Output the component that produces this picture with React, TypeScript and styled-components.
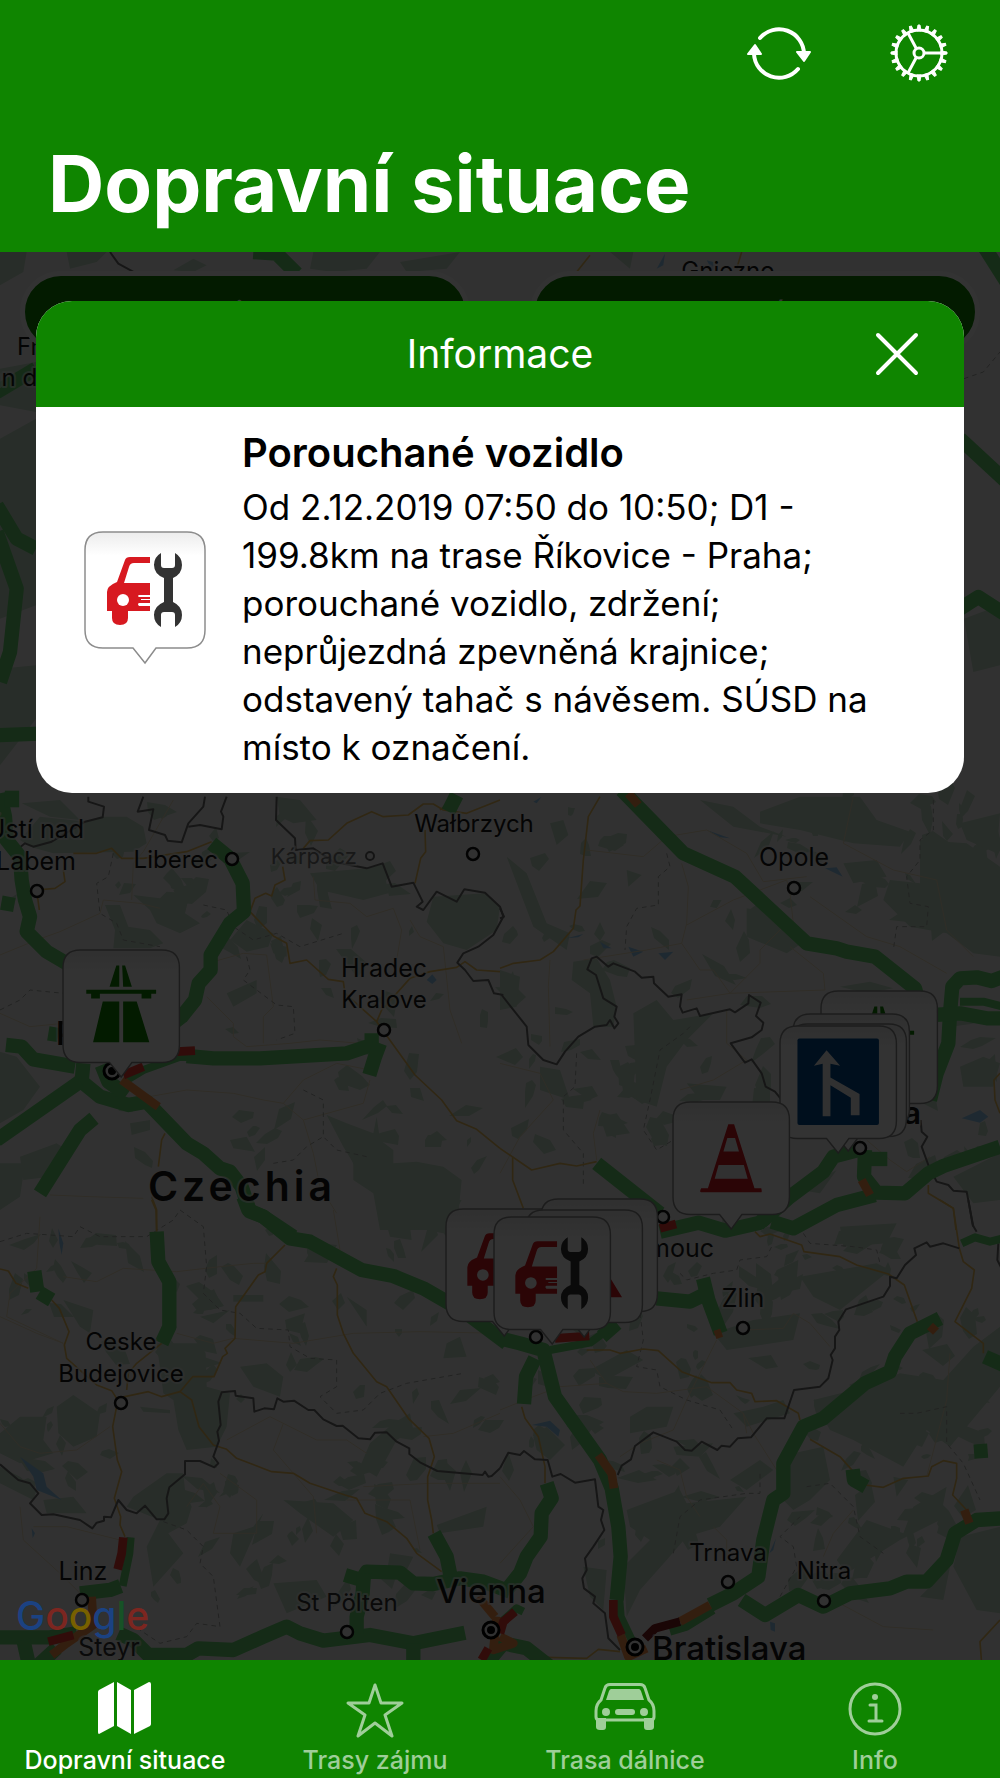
import React from "react";
import styled, { createGlobalStyle } from "styled-components";

const GREEN = "#0f8500";
const FONT = 'Inter, "Liberation Sans", sans-serif';

const GlobalStyle = createGlobalStyle`
  *, *::before, *::after { box-sizing: border-box; }
  body { margin: 0; background: #313131; font-family: ${FONT}; }
  h1, h2, h3, p { margin: 0; }
  button { font: inherit; color: inherit; border: 0; background: none; padding: 0; cursor: pointer; }
`;

/* ---------- layout ---------- */

const Screen = styled.div`
  display: flex;
  flex-direction: column;
  min-height: 100vh;
`;

const Header = styled.header`
  display: flex;
  flex-direction: column;
  padding: 21px 49px 20px 48px;
  background: ${GREEN};
  color: #fff;
`;

const Actions = styled.div`
  display: flex;
  justify-content: flex-end;
  gap: 76px;
`;

const IconButton = styled.button`
  display: grid;
  place-items: center;
  width: 64px;
  height: 64px;
`;

const Title = styled.h1`
  margin-top: 51px;
  font-size: 78px;
  line-height: 96px;
  font-weight: 700;
  white-space: nowrap;
`;

const Stage = styled.main`
  position: relative;
  display: grid;
  flex: 1;
  align-items: start;
  overflow: hidden;
  background: #f5f5f5;
`;

const MapCanvas = styled.svg`
  position: absolute;
  inset: 0;
  width: 100%;
  height: 100%;
  font-family: ${FONT};
`;

const FilterBar = styled.div`
  position: relative;
  grid-area: 1 / 1;
  display: flex;
  gap: 60px;
  padding: 19px 20px;
`;

const Pill = styled.button`
  flex: 1;
  height: 82px;
  border: 5px solid #fff;
  border-radius: 41px;
  background: ${GREEN};
  color: #fff;
  font-size: 30px;
  line-height: 40px;
`;

const Scrim = styled.div`
  position: absolute;
  inset: 0;
  background: rgba(0, 0, 0, 0.8);
`;

const Attribution = styled.div`
  position: absolute;
  left: 16px;
  bottom: 20px;
  font-size: 39px;
  line-height: 48px;
  font-weight: 500;
`;

const Letter = styled.span<{ $color: string }>`
  color: ${(p) => p.$color};
`;

const Dialog = styled.section`
  position: relative;
  grid-area: 1 / 1;
  margin: 49px 36px;
  border-radius: 36px;
  overflow: hidden;
  background: #fff;
  color: #000;
`;

const DialogBar = styled.div`
  display: grid;
  grid-template-columns: 64px 1fr 64px;
  align-items: center;
  height: 106px;
  padding: 0 35px;
  background: ${GREEN};
  color: #fff;
`;

const DialogTitle = styled.h2`
  grid-column: 2;
  text-align: center;
  font-size: 39px;
  line-height: 48px;
  font-weight: 400;
`;

const DialogBody = styled.div`
  display: flex;
  align-items: center;
  gap: 36px;
  padding: 18px 64px 22px 48px;
`;

const DialogIcon = styled.svg`
  flex: none;
  width: 122px;
  height: 134px;
`;

const Message = styled.div`
  flex: 1;
`;

const MessageTitle = styled.h3`
  font-size: 40px;
  line-height: 56px;
  font-weight: 600;
`;

const MessageText = styled.p`
  padding-top: 2px;
  font-size: 35px;
  line-height: 48px;
`;

const TabBar = styled.nav`
  display: flex;
  height: 118px;
  padding-top: 22px;
  background: ${GREEN};
`;

const Tab = styled.a<{ $active?: boolean }>`
  flex: 1;
  display: flex;
  flex-direction: column;
  align-items: center;
  gap: 6px;
  color: ${(p) => (p.$active ? "#fff" : "#9fce99")};
  font-size: 25px;
  line-height: 32px;
  font-weight: 500;
  text-decoration: none;
  white-space: nowrap;
`;

const TabIcon = styled.svg`
  width: 64px;
  height: 56px;
`;

/* ---------- map data: four tiles, each 1500 units wide for 500 px ---------- */

type Kind = "free" | "freeThin" | "slow" | "jam" | "stop" | "road" | "minor" | "border" | "region";
type Line = [Kind, string];

interface Tile {
  x: number;
  y: number;
  woods: string[];
  water: string[];
  lines: Line[];
}

const STROKES: Record<Kind, { stroke: string; width: number; dash?: string }> = {
  minor: { stroke: "#eee0c0", width: 3 },
  region: { stroke: "#a9aca9", width: 3, dash: "14 12" },
  road: { stroke: "#eec062", width: 5 },
  border: { stroke: "#6f6f6f", width: 6 },
  free: { stroke: "#68d673", width: 43 },
  freeThin: { stroke: "#68d673", width: 24 },
  slow: { stroke: "#ff974d", width: 26 },
  jam: { stroke: "#f23c32", width: 26 },
  stop: { stroke: "#811f1f", width: 26 },
};
const ORDER: Kind[] = ["minor", "region", "road", "border", "free", "freeThin", "slow", "jam", "stop"];

const TILES: Tile[] = [
  {
    x: 0,
    y: 780,
    woods: [
      "60,180 120,110 260,125 300,110 380,110 430,140 440,190 400,215 160,220 90,200",
      "315,375 360,375 385,440 450,450 490,490 450,505 340,505 345,450",
      "400,345 480,355 500,335 570,340 555,400 600,430 540,460 470,430 450,390",
      "0,815 50,830 120,920 70,990 0,1030",
      "980,1005 1040,1030 1120,1060 1130,1010 1140,1080 1180,1110 1180,1150 1250,1145 1330,1160 1385,1200 1370,1350 1140,1350 1120,1240 1060,1200 1060,1150 1030,1100",
      "1300,350 1455,340 1500,380 1490,450 1400,510 1330,490 1280,425",
      "930,280 1100,265 1150,260 1165,340 1090,360 960,330",
      "60,1130 170,1090 200,1110 150,1190 70,1200",
      "690,480 740,420 820,460 805,500 740,515",
      "830,50 900,60 950,120 880,130 840,110",
      "680,640 770,600 770,640 700,680",
      "0,1150 75,1150 60,1250 0,1290",
      "65,70 180,60 240,120 150,110",
      "520,330 590,305 580,330 530,350",
      "810,490 860,500 860,530 820,520",
      "390,1030 450,1020 450,1050 395,1065",
      "690,1080 740,1070 765,1115 700,1105",
    ],
    water: ["1280,600 1297,583 1310,600 1297,612"],
    lines: [
      ["minor", "0,525 110,480 180,455 300,400 310,360 420,370 480,385"],
      ["minor", "110,990 170,940 220,900 300,700"],
      ["minor", "395,360 400,250 430,215 520,60"],
      ["minor", "620,650 700,730 700,770 740,800 870,790 960,780 1080,790"],
      ["minor", "640,545 730,520 800,525 820,680 790,710 790,790"],
      ["minor", "420,955 560,930 700,940 790,960 850,970 910,1020 940,1120 960,1220 1010,1300"],
      ["minor", "850,970 910,900 1010,850 1110,870"],
      ["minor", "910,1020 1090,970 1110,900"],
      ["minor", "940,290 945,360 1050,370 1100,410 1180,385 1205,450 1190,540"],
      ["minor", "1230,420 1260,470 1330,500 1350,690 1385,790"],
      ["minor", "0,700 90,740 190,730"],
      ["minor", "150,1245 270,1250 430,1255"],
      ["region", "340,220 325,290 290,310 300,400 350,430 370,480 480,500"],
      ["region", "610,375 680,390 700,440 760,480 830,460 900,500 1030,460"],
      ["region", "740,530 750,570 730,600 830,675 880,680 885,760 830,780"],
      ["region", "910,930 970,960 970,1070 1010,1110 1100,1130"],
      ["region", "0,690 60,660 90,630 190,640"],
      ["region", "820,1150 880,1140 920,1100 970,1070"],
      ["road", "220,220 290,220 335,205 365,235 430,235 560,215 635,185"],
      ["road", "750,395 820,468 860,490 870,550 920,540 985,598 1030,605 1035,640 1130,725 1245,885 1325,960 1370,1022 1430,1048 1500,1105"],
      ["road", "910,205 930,182 985,180 1040,130 1115,95 1150,110 1225,105 1270,72 1300,72 1330,90 1400,100 1500,60"],
      ["road", "1275,150 1277,215 1262,235 1245,310"],
      ["road", "750,395 765,355 797,340 815,348 825,315 855,300 848,260"],
      ["road", "1130,725 1145,690 1230,595 1290,575 1370,562 1395,545 1430,570 1500,575"],
      ["road", "495,1060 485,1080 475,1160"],
      ["road", "455,1250 470,1290 470,1350"],
      ["road", "190,270 195,305 165,325 110,330 118,390"],
      ["road", "1365,50 1320,90"],
      ["border", "265,50 265,65 312,80 308,112 255,125 155,185 100,200 75,190 50,210"],
      ["border", "430,50 413,95 460,88 447,150 495,165 503,182 545,187 565,130 610,80 615,50"],
      ["border", "565,140 600,135 665,148 670,110 663,95 680,50"],
      ["border", "830,50 828,120 885,175 887,210 940,205 1000,245 1100,265 1148,250 1175,320 1240,308 1268,365 1250,380 1270,390 1310,335 1370,365 1393,328 1455,338 1500,380 1510,410 1480,465 1435,500 1390,520 1372,548 1395,570 1420,603 1465,600 1482,640 1510,645"],
      ["free", "0,40 15,110 20,180 60,230 65,300 75,360 90,410 80,455 140,515 200,550 360,640"],
      ["free", "36,32 36,82"],
      ["free", "4,368 43,375"],
      ["free", "635,190 690,235 728,310 732,395 690,430 632,525 632,570 596,610 585,660 545,710 480,760"],
      ["free", "18,795 65,800 100,838 225,860"],
      ["free", "250,850 245,905 300,950 385,975 440,965 560,1090 610,1120 660,1165 690,1175 725,1220 750,1295 790,1310 880,1370"],
      ["free", "-10,1080 240,905"],
      ["free", "305,855 325,905 380,945"],
      ["free", "282,1015 240,1050 180,1145 120,1240"],
      ["free", "560,828 640,835 780,835 1040,820 1115,795 1115,760"],
      ["freeThin", "380,900 430,870 540,830 600,832"],
      ["free", "1140,790 1125,830 1108,885"],
      ["free", "1345,95 1370,45"],
      ["free", "145,760 175,765"],
      ["slow", "365,900 475,980"],
      ["jam", "370,885 430,860"],
      ["jam", "530,815 585,812"],
    ],
  },
  {
    x: 500,
    y: 780,
    woods: [
      "780,95 900,50 1080,50 1130,120 1230,155 1200,200 1060,190 900,150 780,130",
      "1260,180 1400,190 1500,260 1500,530 1420,520 1340,460 1230,440 1150,360 1170,300 1260,310",
      "740,385 820,400 920,480 860,520 740,470",
      "400,700 470,660 520,720 640,700 560,780 500,860 470,980 410,960",
      "220,545 290,535 330,600 350,680 340,740 280,740 270,640 215,600",
      "0,570 60,590 50,680 0,690",
      "20,230 80,280 140,430 210,460 200,510 100,440",
      "150,130 190,120 205,165 170,195",
      "1380,860 1450,830 1500,850 1480,920 1390,920",
      "1360,1190 1500,1120 1500,1260 1420,1270",
      "1030,250 1130,240 1160,290 1060,310",
      "120,860 180,870 210,960 120,930",
      "300,1010 350,1000 390,1060 320,1070",
      "560,910 680,920 660,960 600,960",
      "640,360 665,360 650,385 630,380",
      "1380,130 1500,100 1490,220 1400,180",
      "380,270 425,285 385,320",
      "600,60 700,80 780,140 860,170 700,140",
      "1020,620 1110,605 1180,625 1100,640",
      "900,1230 1010,1170 960,1240",
    ],
    water: [
      "385,500 430,515 400,530",
      "475,520 520,515 495,540",
      "1385,1015 1440,990 1465,1010 1440,1028",
      "975,265 1010,262 1028,290",
      "620,150 690,175 660,172",
      "200,475 250,462 235,472",
      "300,485 335,505 310,505",
      "100,65 125,50 110,70",
    ],
    lines: [
      ["minor", "260,210 430,230 500,170 620,150 740,220 790,305 920,290"],
      ["minor", "560,435 700,360 860,300 870,340 880,430"],
      ["minor", "545,250 565,320 560,430 545,490 440,510 250,540"],
      ["minor", "545,490 600,570 640,570 690,640 780,550 780,510 850,440"],
      ["minor", "870,500 970,580 975,630 690,640 560,660"],
      ["minor", "680,690 680,790 740,840 640,900 540,930"],
      ["minor", "0,850 120,880 160,960 60,1070 0,1180"],
      ["minor", "300,990 280,1060 290,1140"],
      ["minor", "150,540 145,620 150,800"],
      ["minor", "930,350 1100,470 1200,500 1340,580"],
      ["minor", "1060,50 1030,190 1180,270 1310,300 1340,450 1420,530"],
      ["minor", "1100,1080 1170,1140 1220,1175 1290,1130"],
      ["region", "500,220 510,260 475,290 475,375 410,385 380,440 375,510"],
      ["region", "570,740 550,760 480,810 450,960 430,1050 470,1110 520,1080"],
      ["region", "230,820 225,920 190,950 190,1050 250,1120 250,1220"],
      ["region", "1300,60 1300,150 1260,180 1260,240 1220,290 1230,370 1285,380 1280,440 1190,440 1180,510"],
      ["road", "0,565 40,550 120,540 160,515 220,445 228,390 240,378 250,240 265,110 300,50"],
      ["road", "0,1105 95,1170 180,1150 230,1158 290,1145"],
      ["road", "38,1130 38,1200 70,1285"],
      ["road", "1500,880 1482,900 1485,960 1500,1000"],
      ["road", "1285,1215 1285,1240 1360,1285 1368,1350"],
      ["border", "0,385 12,410 0,415"],
      ["border", "5,645 80,740 85,795 130,840 170,853 195,815 235,770 285,740 320,735 330,720 343,745 355,730 343,710 350,680 310,655 288,585 262,568 275,535 290,530 325,560 340,550 405,575 425,593 460,590 462,610 505,650 545,643 540,680 548,698 590,685 600,708 690,688 705,697 745,670 747,645 782,668 768,708 790,728 785,750 755,772 692,790 735,848 755,838 785,880 797,920 825,935 845,960"],
      ["border", "1262,1020 1265,1055 1282,1070 1265,1100 1285,1155 1310,1205 1345,1215 1360,1232 1400,1235 1420,1340"],
      ["free", "365,30 550,220 705,290 920,490 1010,505 1040,515 1125,530 1245,625 1260,680"],
      ["free", "1510,590 1475,603 1430,592 1380,595 1357,620 1350,700 1345,790 1310,880 1290,960"],
      ["free", "1300,705 1380,700 1460,715 1510,715"],
      ["freeThin", "1380,665 1450,665 1510,680"],
      ["free", "290,1150 480,1300"],
      ["free", "1095,1105 1000,1130 970,1175 870,1250 785,1325"],
      ["free", "1095,1110 1092,1190 1130,1238 1215,1240 1285,1180 1330,1158 1500,1100"],
      ["free", "1110,1137 1162,1137"],
      ["slow", "385,40 415,75"],
      ["slow", "1085,1200 1110,1245"],
    ],
  },
  {
    x: 0,
    y: 1200,
    woods: [
      "470,430 600,430 617,460 620,560 690,580 680,680 650,740 560,750 535,690 520,600 490,580",
      "1140,0 1385,0 1330,100 1230,80 1235,120 1170,110",
      "170,620 220,585 300,640 290,710 220,740 175,700",
      "0,700 60,650 140,650 130,720 160,760 60,790 0,760",
      "400,890 500,820 550,820 555,870 575,920 560,970 505,1000 550,1060 460,1160 440,1040 480,960 380,920",
      "130,900 220,890 260,940 140,940",
      "700,1000 760,980 790,940 720,1100 690,1060",
      "850,900 1000,910 1060,960 1000,1010 900,940",
      "820,1150 950,1140 980,1190 860,1240",
      "1340,430 1380,410 1400,470 1330,475",
      "720,500 800,490 850,530 840,590 760,560",
      "1180,670 1230,640 1240,690 1190,720 1130,830 1080,800 1110,730",
      "190,300 280,330 270,400 240,380",
      "420,620 510,630 510,640 430,635",
      "855,360 915,340 900,400 860,390",
      "1310,975 1460,920 1450,980 1320,1000",
      "0,800 60,830 110,870 100,900 0,850",
      "700,285 790,285 790,305 700,305",
      "600,350 690,330 640,370",
      "1040,290 1100,330 1100,380",
      "1170,1060 1240,1070 1220,1110 1160,1120",
    ],
    water: ["60,770 130,820 140,860 185,900 110,870 100,830", "175,85 190,130 185,165 178,130", "95,985 105,1000 98,1015"],
    lines: [
      ["minor", "0,670 60,740 120,760 230,750 330,680"],
      ["minor", "0,350 110,400 190,430 20,350 30,280 110,205 120,50"],
      ["minor", "190,230 290,245 370,205 530,215 660,200 760,190 800,190"],
      ["minor", "530,400 640,430 700,415 880,430 1060,400 1260,395 1500,400"],
      ["minor", "680,720 810,650 950,720 1040,720 1100,760"],
      ["minor", "850,670 820,750 940,890 950,1000"],
      ["minor", "560,920 610,850 660,920 640,1000 770,1000 770,900 660,820"],
      ["minor", "60,920 70,1020 180,1120 240,1180"],
      ["minor", "100,980 200,980 360,1020"],
      ["minor", "1090,860 1290,850 1500,850"],
      ["minor", "1040,900 1230,900 1260,1050"],
      ["minor", "1270,710 1360,700 1500,640"],
      ["minor", "1000,30 1020,150 900,100"],
      ["region", "0,125 80,100 220,110 240,80 300,110 440,110 520,60 540,30 610,80 620,200 610,280 660,330 720,340 770,385 865,390 870,440 930,475 1010,480 1010,560 960,590 1010,640 1090,630 1140,580 1220,550 1390,520"],
      ["region", "490,965 560,990 610,1040 600,1090 640,1130 660,1280 590,1270 560,1310 480,1330 420,1290"],
      ["road", "0,207 25,213 48,250 85,265"],
      ["road", "455,0 468,30 470,95"],
      ["road", "155,300 178,325 207,395 193,435 200,475 290,555 335,572 350,595 445,575 485,590 540,575 578,530 642,530 668,470 682,460 675,445 705,415 707,320 775,225 795,215 800,190 855,135"],
      ["road", "485,430 410,490 385,520 380,570"],
      ["road", "350,620 338,680 352,780 365,815 343,895 362,950 360,975 375,1010"],
      ["road", "540,575 575,600 597,680 640,735 680,748 710,775 815,815 880,820 930,850 1035,885 1070,895 1095,940 1160,965 1220,1015 1250,1060 1325,1115"],
      ["road", "1010,205 1000,230 1012,255 1012,345 1030,400 1060,460 1130,545 1160,560 1225,655 1287,715 1303,770 1283,830 1283,900 1295,960 1300,1000"],
      ["border", "0,793 55,840 90,850 115,880 90,910 125,945 160,943 240,960 277,985 290,968 312,962 312,950 333,952 355,900 380,930 410,940 435,917 470,958 493,958 505,940 500,895 508,862 555,823 555,783 600,783 643,802 655,790 640,770 657,722 652,695 662,675 655,605 665,577 705,573 707,587 760,595 763,635 793,625 822,628 832,595 850,605 882,602 925,630 943,630 970,658 1010,678 1028,677 1075,715 1110,718 1125,698 1160,697 1190,725 1228,745 1228,762 1260,787 1312,813 1448,825 1455,815 1465,830 1475,828 1500,805"],
      ["free", "730,-10 745,30 790,50 870,115 930,125 1085,210 1180,228 1270,265 1400,340 1520,430"],
      ["free", "470,95 475,185 508,245 508,380 485,430"],
      ["free", "103,213 112,275"],
      ["free", "118,278 155,300"],
      ["freeThin", "392,1012 388,1060 368,1158"],
      ["free", "240,1180 330,1170 362,1158"],
      ["free", "0,1312 150,1312 230,1300"],
      ["free", "70,1320 88,1400"],
      ["free", "110,1400 170,1345"],
      ["free", "355,1300 400,1320 445,1365 560,1365 595,1345 700,1350 790,1310 860,1280 900,1300 970,1322 1110,1305 1240,1330 1395,1298"],
      ["free", "1240,1330 1240,1400"],
      ["free", "1035,1125 1085,1140 1100,1115 1200,1118 1240,1150 1300,1152 1380,1135 1450,1145 1530,1175"],
      ["free", "1092,1120 1088,1180 1070,1250 1070,1300"],
      ["free", "1302,1000 1340,1070 1352,1130"],
      ["slow", "155,1365 200,1330 280,1275 275,1190"],
      ["slow", "1435,1190 1485,1250"],
      ["jam", "370,1012 365,1060 353,1108"],
      ["jam", "145,1325 220,1305"],
    ],
  },
  {
    x: 500,
    y: 1200,
    woods: [
      "380,930 540,870 560,910 740,890 660,980 560,1010 500,1080 420,1170 380,1250 370,1100 450,1020 390,980",
      "250,1100 320,1110 310,1230 270,1190",
      "880,760 970,740 990,840 930,900 880,930 830,880 860,800",
      "940,600 1100,560 1200,520 1330,540 1420,440 1500,380 1500,560 1350,740 1280,690 1210,800 1060,720 990,690",
      "1010,1080 1100,960 1210,1000 1240,920 1340,860 1320,960 1200,1020 1120,1070 1040,1120",
      "1380,1010 1500,980 1500,1240 1430,1230 1360,1100",
      "900,230 1130,190 1170,210 1020,330 940,290",
      "640,400 760,360 900,340 880,420 680,450",
      "270,510 380,450 430,480 320,540",
      "390,650 440,620 520,620 500,680 390,700",
      "1020,80 1190,70 1160,130 1030,140",
      "690,840 780,780 820,810 740,870",
      "700,640 790,620 850,600 870,640 740,680",
      "520,740 640,730 600,770 530,765",
      "100,710 140,680 195,735 150,780 110,750",
      "830,210 895,180 890,240 840,260",
      "1180,830 1225,840 1190,890",
      "1260,1190 1350,1100 1330,1200",
    ],
    water: ["95,675 150,662 180,690 175,710 140,680", "810,1265 825,1270 825,1295 812,1290", "808,1060 828,1015 820,1050"],
    lines: [
      ["minor", "0,630 100,590 180,560 320,550 370,575 470,580 620,560 730,640 740,700"],
      ["minor", "270,480 320,550"],
      ["minor", "730,640 760,700 830,810"],
      ["minor", "360,770 420,730 520,690 560,600 650,420"],
      ["minor", "470,780 540,810 560,890 600,950"],
      ["minor", "740,390 850,385 880,340 930,370 990,440"],
      ["minor", "680,1090 680,1020 640,980"],
      ["minor", "1060,930 1000,1000 970,1070"],
      ["minor", "1280,830 1340,600 1350,460"],
      ["minor", "1000,1200 1150,1280 1300,1290"],
      ["minor", "0,830 60,900 100,980 0,1090"],
      ["region", "540,220 560,240 640,220 710,210 720,180 800,170 820,130"],
      ["region", "420,340 430,420 410,500 470,510 480,560 560,600 660,630 700,690"],
      ["region", "910,100 930,130 1060,140 1130,150 1140,190"],
      ["region", "1200,640 1250,640 1340,620 1340,730 1390,790 1440,900"],
      ["region", "520,1060 540,950 600,900 740,880 780,880 780,810"],
      ["region", "840,1190 890,1100 880,1040 840,1010 900,950"],
      ["region", "920,860 990,850 1060,920 1080,1010 1150,1060"],
      ["road", "260,450 330,450 360,460 430,447 475,452 545,515 635,548 690,548 710,570 755,580 765,605 830,602 895,640 900,660"],
      ["road", "765,95 780,110 810,102 905,135 912,155 1020,170 1070,195 1165,222 1213,255 1252,365"],
      ["road", "1320,0 1360,25 1378,145 1390,185 1423,210 1415,265 1365,365 1450,430 1450,460"],
      ["road", "930,718 1020,770 1060,815"],
      ["road", "1095,855 1150,862 1210,835 1285,828 1295,800 1330,782 1370,790 1370,835 1358,885 1400,930"],
      ["road", "65,620 75,655 115,710 135,800 135,850"],
      ["road", "1500,1260 1440,1325 1445,1390"],
      ["road", "140,1372 260,1375 295,1348 360,1355"],
      ["border", "1405,0 1418,75 1430,95"],
      ["border", "1378,145 1330,130 1290,140 1280,127 1243,145 1248,165 1215,195 1190,235 1170,230 1170,258 1150,290 1038,328 1015,365 1018,390 1005,410 1005,445 992,465 998,480 985,535 960,560 882,570 853,655 800,655 753,712 713,715 690,740 665,737 652,750 605,725 575,752 555,750 530,725 460,697 405,738 393,778 365,797 353,825"],
      ["border", "0,805 25,758 60,765 72,753 105,778 143,780 157,830 182,822 225,848 285,838 295,920 310,930 303,960 313,990 280,1040 255,1075 260,1110 247,1135 252,1165 285,1190 280,1210 315,1240 325,1315 360,1350"],
      ["border", "1495,130 1492,180 1510,215"],
      ["free", "860,-15 780,68 675,92 595,68 480,95"],
      ["free", "815,65 880,85 1010,15 1125,-15"],
      ["free", "470,295 570,305 610,285"],
      ["free", "609,235 625,300 662,400"],
      ["free", "0,415 60,430 130,450 165,590 300,780 335,865 355,980 362,1070 350,1200"],
      ["freeThin", "358,1200 362,1250 400,1330"],
      ["free", "105,475 78,530 72,612"],
      ["freeThin", "150,450 270,428 350,370"],
      ["free", "305,410 350,370"],
      ["free", "140,850 155,895 125,940 122,1010 80,1070 60,1120 20,1170"],
      ["free", "630,1215 700,1180 775,1130 790,1020 820,900 850,880 850,790 910,680 970,655 1095,550 1170,515 1185,470 1230,400 1320,355"],
      ["freeThin", "510,1295 560,1280 640,1230"],
      ["free", "725,1200 795,1245 895,1185 970,1220 1050,1180 1170,1165 1220,1145 1280,1145 1340,1080 1365,1000 1430,960 1510,955"],
      ["free", "1058,808 1062,840 1098,860"],
      ["free", "1422,755 1463,752"],
      ["free", "1455,470 1510,495"],
      ["freeThin", "1385,130 1425,112 1470,125 1510,115"],
      ["freeThin", "0,1270 50,1225 70,1235"],
      ["free", "-40,1390 10,1330 80,1345 150,1400"],
      ["slow", "295,765 335,820 342,865"],
      ["slow", "540,1265 630,1215"],
      ["slow", "1393,930 1408,970"],
      ["slow", "1290,378 1308,395"],
      ["slow", "362,1305 385,1370 440,1345"],
      ["slow", "645,405 665,398"],
      ["slow", "-10,1250 -20,1350 40,1330 0,1310"],
      ["jam", "165,415 268,408"],
      ["jam", "340,1200 340,1250 365,1305"],
      ["jam", "45,1235 10,1265 0,1300"],
      ["jam", "480,85 528,72"],
      ["jam", "-55,1380 -35,1345"],
      ["stop", "435,1315 465,1285 540,1265"],
    ],
  },
  {
    x: 0,
    y: 252,
    woods: [
      "0,0 80,0 70,60 0,100",
      "200,0 320,0 290,30 210,50",
      "520,55 580,20 620,40 580,60",
      "940,0 1140,0 1100,50 1000,60 930,50",
      "1200,30 1380,0 1340,50 1220,60",
      "1830,0 1900,0 1890,50",
      "0,350 108,330 108,480 0,460",
      "0,560 108,500 108,1060 0,1100",
      "0,1250 108,1240 108,1400 0,1540",
      "2892,1100 3000,1060 3000,1240 2920,1260",
    ],
    water: ["1970,50 1995,5 1990,40", "2120,25 2140,30 2140,60"],
    lines: [
      ["border", "330,0 355,35 410,65"],
      ["road", "1730,60 1770,10"],
      ["road", "2210,50 2225,0"],
      ["free", "760,0 830,5 890,65"],
      ["free", "2950,-20 3020,90"],
      ["free", "-10,420 108,350"],
      ["free", "-10,760 50,860 108,890"],
      ["free", "-10,840 50,1010 30,1200 0,1290"],
      ["free", "-10,1450 120,1445"],
      ["free", "2880,560 3020,690"],
      ["free", "2880,1070 2935,1035 3020,1090"],
      ["region", "2892,380 2950,360 3000,300"],
    ],
  },
];

/* Small copses between the large woods: [centre x, centre y, spread x, spread y, count] in map pixels. */
const COPSES = [
  [160, 860, 150, 50, 22],
  [300, 930, 130, 70, 16],
  [240, 1080, 200, 90, 22],
  [430, 1080, 70, 90, 12],
  [600, 1040, 90, 110, 30],
  [700, 1010, 70, 90, 16],
  [560, 880, 60, 70, 10],
  [860, 860, 110, 70, 26],
  [950, 860, 50, 60, 26],
  [950, 1080, 50, 90, 14],
  [110, 1300, 100, 70, 20],
  [280, 1310, 120, 90, 22],
  [420, 1260, 70, 60, 10],
  [60, 1450, 60, 60, 14],
  [300, 1530, 150, 70, 38],
  [430, 1440, 80, 60, 16],
  [680, 1340, 110, 70, 26],
  [800, 1270, 100, 50, 24],
  [900, 1380, 90, 80, 34],
  [680, 1500, 80, 70, 16],
  [880, 1530, 90, 60, 26],
  [560, 1420, 70, 60, 8],
];

function buildCopses(): string[] {
  let seed = 7;
  const next = () => {
    seed = (seed * 16807) % 2147483647;
    return seed / 2147483647;
  };
  const shapes: string[] = [];
  for (const [cx, cy, dx, dy, count] of COPSES) {
    for (let i = 0; i < count; i += 1) {
      const x = cx + (next() * 2 - 1) * dx;
      const y = cy + (next() * 2 - 1) * dy;
      const size = 4 + next() * 9;
      const sides = 4 + Math.floor(next() * 3);
      const turn = next() * Math.PI;
      const points: string[] = [];
      for (let k = 0; k < sides; k += 1) {
        const angle = (k / sides) * Math.PI * 2;
        const r = size * (0.5 + next() * 0.9);
        const px = Math.cos(angle) * r * 1.4;
        const py = Math.sin(angle) * r * 0.7;
        points.push(
          `${Math.round(x + px * Math.cos(turn) - py * Math.sin(turn))},${Math.round(y + px * Math.sin(turn) + py * Math.cos(turn))}`,
        );
      }
      shapes.push(points.join(" "));
    }
  }
  return shapes;
}

const COPSE_SHAPES = buildCopses();

interface City {
  name: string;
  x: number;
  y: number;
  size?: number;
  weight?: number;
  anchor?: "start" | "middle" | "end";
  fill?: string;
  tracking?: number;
}

const CITIES: City[] = [
  { name: "Gniezno", x: 728, y: 279 },
  { name: "Frankfurt", x: 17, y: 355, anchor: "start" },
  { name: "an der Oder", x: -12, y: 386, anchor: "start" },
  { name: "Ústí nad", x: 84, y: 838, anchor: "end", size: 25 },
  { name: "Labem", x: 76, y: 870, anchor: "end", size: 25 },
  { name: "Liberec", x: 218, y: 868, anchor: "end" },
  { name: "Kárpacz", x: 357, y: 864, anchor: "end", size: 22, fill: "#777" },
  { name: "Wałbrzych", x: 474, y: 832 },
  { name: "Opole", x: 794, y: 866, size: 25 },
  { name: "Hradec", x: 384, y: 977, size: 25 },
  { name: "Kralove", x: 384, y: 1008 },
  { name: "Prague", x: 56, y: 1045, size: 32, weight: 600, anchor: "start" },
  { name: "Czechia", x: 242, y: 1201, size: 41, weight: 600, tracking: 4 },
  { name: "Ostrava", x: 921, y: 1124, size: 31, weight: 600, anchor: "end" },
  { name: "Olomouc", x: 714, y: 1257, anchor: "end", size: 25 },
  { name: "Zlin", x: 743, y: 1307, size: 25 },
  { name: "Ceske", x: 121, y: 1350 },
  { name: "Budejovice", x: 121, y: 1382 },
  { name: "Linz", x: 83, y: 1580, size: 25 },
  { name: "St Pölten", x: 347, y: 1611, fill: "#333" },
  { name: "Steyr", x: 109, y: 1656, size: 25, fill: "#333" },
  { name: "Vienna", x: 491, y: 1603, size: 33, weight: 500 },
  { name: "Trnava", x: 728, y: 1561 },
  { name: "Nitra", x: 824, y: 1579 },
  { name: "Bratislava", x: 652, y: 1660, size: 33, weight: 500, anchor: "start" },
];

const TOWNS = [
  [37, 891], [232, 859], [473, 854], [794, 888], [384, 1030], [860, 1148], [663, 1217], [536, 1337],
  [743, 1328], [121, 1403], [82, 1600], [347, 1632], [728, 1582], [824, 1601],
];
const CAPITALS = [[112, 1071], [491, 1630], [635, 1647]];

type MarkerKind = "car" | "motorway" | "cone" | "merge" | "warning" | "blank";

const MARKERS: [MarkerKind, number, number][] = [
  ["motorway", 63, 950],
  ["motorway", 821, 991],
  ["blank", 793, 1014],
  ["blank", 790, 1024],
  ["merge", 780, 1026],
  ["cone", 673, 1102],
  ["car", 446, 1209],
  ["blank", 541, 1199],
  ["warning", 526, 1210],
  ["car", 494, 1217],
];

/* ---------- drawings ---------- */

function MarkerGlyph({ kind }: { kind: MarkerKind }) {
  switch (kind) {
    case "car":
      return (
        <g>
          <path
            d="M65 25H45Q41 25 40 28L32 50Q22 54 22 60V79H27V86Q27 93 35 93T43 86V79H65V74H54Q52 72 54 71H65V68H56V67H65V65H54Q52 64 54 63H65V51H39L44 35Q45 31 49 31H65Z"
            fill="#d71920"
          />
          <circle cx="38" cy="68" r="6" fill="#fff" />
          <path
            d="M76 21V33Q76 36 79 36H87Q90 36 90 33V21Q97 25 97 33Q97 42 88 46V70Q97 74 97 83Q97 91 90 95V83Q90 80 87 80H79Q76 80 76 83V95Q69 91 69 83Q69 74 79 70V46Q69 42 69 33Q69 25 76 21Z"
            fill="#333"
          />
        </g>
      );
    case "motorway":
      return (
        <path
          d="M55 16H58V38H48ZM61 16H64L71 38H62ZM24 41H96V45H91V50H81V45H38V50H29V45H24ZM41 53H58V95H31ZM62 53H76L89 95H62Z"
          fill={GREEN}
        />
      );
    case "cone":
      return (
        <g>
          <path d="M57 23H63L84 89H91Q92 93 91 93H29Q27 93 29 89H36Z" fill="#d71920" />
          <path d="M56 37H64L68 51H52ZM47 65H73L77 79H43Z" fill="#f5f5f5" />
        </g>
      );
    case "merge":
      return (
        <g>
          <rect x="18" y="13" width="84" height="89" rx="2" fill="#004a8f" />
          <path d="M48 25L62 41L52 39V53L82 70V92H73V74L52 61V93H44V39L35 41Z" fill="#f5f5f5" />
        </g>
      );
    case "warning":
      return <path d="M60 26L99 90H21ZM60 43L37 82H83Z" fillRule="evenodd" fill="#d71920" />;
    default:
      return null;
  }
}

function Marker({ kind }: { kind: MarkerKind }) {
  return (
    <g>
      <path
        d="M18 0H102Q120 0 120 18V98Q120 116 102 116H71L60 131L48 116H18Q0 116 0 98V18Q0 0 18 0Z"
        fill="url(#bubble)"
        stroke="#8c8c8c"
        strokeWidth="1.5"
      />
      <MarkerGlyph kind={kind} />
    </g>
  );
}

function TrafficMap() {
  return (
    <MapCanvas viewBox="0 252 1000 1408" preserveAspectRatio="xMidYMin slice" role="img" aria-label="Mapa dopravní situace">
      <defs>
        <linearGradient id="bubble" x1="0" y1="0" x2="0" y2="1">
          <stop offset="0" stopColor="#ececec" />
          <stop offset="0.18" stopColor="#fff" />
        </linearGradient>
      </defs>
      <g fill="#c6e0ca">
        {COPSE_SHAPES.map((points, i) => (
          <polygon key={i} points={points} />
        ))}
      </g>
      {TILES.map((tile, i) => (
        <g key={i} transform={`translate(${tile.x} ${tile.y}) scale(0.33333)`}>
          {tile.woods.map((points) => (
            <polygon key={points} points={points} fill="#c6e0ca" />
          ))}
          {tile.water.map((points) => (
            <polygon key={points} points={points} fill="#98cdf2" />
          ))}
        </g>
      ))}
      {ORDER.map((kind) => (
        <g key={kind}>
          {TILES.map((tile, i) => (
            <g
              key={i}
              transform={`translate(${tile.x} ${tile.y}) scale(0.33333)`}
              fill="none"
              stroke={STROKES[kind].stroke}
              strokeWidth={STROKES[kind].width}
              strokeDasharray={STROKES[kind].dash}
              strokeLinejoin="round"
            >
              {tile.lines
                .filter(([k]) => k === kind)
                .map(([, points]) => (
                  <polyline key={points} points={points} />
                ))}
            </g>
          ))}
        </g>
      ))}
      {TOWNS.map(([x, y]) => (
        <circle key={`${x}-${y}`} cx={x} cy={y} r="6" fill="#f5f5f5" stroke="#111" strokeWidth="2.5" />
      ))}
      <circle cx="370" cy="856" r="4" fill="#f5f5f5" stroke="#666" strokeWidth="2" />
      {CAPITALS.map(([x, y]) => (
        <g key={`${x}-${y}`}>
          <circle cx={x} cy={y} r="8" fill="#f5f5f5" stroke="#000" strokeWidth="3" />
          <circle cx={x} cy={y} r="4" fill="#000" />
        </g>
      ))}
      {CITIES.map((c) => (
        <text
          key={c.name}
          x={c.x}
          y={c.y}
          fontSize={c.size ?? 24}
          fontWeight={c.weight ?? 400}
          textAnchor={c.anchor ?? "middle"}
          letterSpacing={c.tracking}
          fill={c.fill ?? "#181818"}
          stroke="#f5f5f5"
          strokeOpacity="0.6"
          strokeWidth="4"
          strokeLinejoin="round"
          paintOrder="stroke"
        >
          {c.name}
        </text>
      ))}
      {MARKERS.map(([kind, x, y]) => (
        <g key={`${x}-${y}`} transform={`translate(${x} ${y}) scale(0.97)`}>
          <Marker kind={kind} />
        </g>
      ))}
    </MapCanvas>
  );
}

const RefreshIcon = () => (
  <svg width="64" height="64" viewBox="0 0 64 64" fill="none" stroke="#fff" strokeWidth="4" strokeLinecap="round">
    <path d="M13 17A25 25 0 0 1 57 33" />
    <path d="M51 48A25 25 0 0 1 7 33" />
    <path d="M50 31H63L57 40ZM1 33H14L8 24Z" fill="#fff" stroke="#fff" strokeWidth="2" strokeLinejoin="round" />
  </svg>
);

const TEETH = Array.from({ length: 20 }, (_, i) => i * 18);

const GearIcon = () => (
  <svg width="64" height="64" viewBox="0 0 64 64" fill="none" stroke="#fff" strokeWidth="3">
    <circle cx="32" cy="32" r="23" />
    <circle cx="32" cy="32" r="5" />
    <path d="M38 32H55M29 27L21 12M29 37L21 52" />
    {TEETH.map((a) => (
      <path key={a} d="M54 30L60 31V33L54 34Z" fill="#fff" strokeWidth="1" transform={`rotate(${a} 32 32)`} />
    ))}
  </svg>
);

const CloseIcon = () => (
  <svg width="48" height="48" viewBox="0 0 48 48" stroke="#fff" strokeWidth="4" strokeLinecap="round">
    <path d="M5 5L43 43M43 5L5 43" />
  </svg>
);

const MapTabIcon = () => (
  <TabIcon viewBox="0 0 64 56" fill="currentColor">
    <path d="M6 8L21 0V44L6 52Q5 52 5 50V10Q5 9 6 8ZM24 0L38 8V52L24 44ZM41 8L56 0Q58 0 58 2V42Q58 43 57 44L41 52Z" />
  </TabIcon>
);

const StarTabIcon = () => (
  <TabIcon viewBox="0 0 64 56" fill="none" stroke="currentColor" strokeWidth="3" strokeLinejoin="round">
    <path d="M32 3L38 21H59L42 33L49 54L32 41L15 54L22 33L5 21H26Z" />
  </TabIcon>
);

const CarTabIcon = () => (
  <TabIcon viewBox="0 0 64 56" fill="currentColor">
    <path
      d="M17 2.5H47Q51 2.5 52 6L56 18Q61 22 61 29V35Q61 38 57 38H7Q3 38 3 35V29Q3 22 8 18L12 6Q13 2.5 17 2.5Z"
      fill="none"
      stroke="currentColor"
      strokeWidth="3"
    />
    <path d="M18 7H46Q47 7 48 9L51 18H13L16 9Q17 7 18 7ZM3 36H13V45Q13 48 10 48H7Q3 48 3 45ZM51 36H61V45Q61 48 57 48H54Q51 48 51 45Z" />
    <circle cx="13" cy="30" r="4" />
    <circle cx="51" cy="30" r="4" />
    <rect x="22" y="27" width="20" height="6" rx="3" />
  </TabIcon>
);

const InfoTabIcon = () => (
  <TabIcon viewBox="0 0 64 56" fill="none" stroke="currentColor" strokeWidth="3">
    <circle cx="32" cy="27" r="25" />
    <circle cx="32" cy="15" r="3" fill="currentColor" stroke="none" />
    <path d="M27 23H33V39M26 39H39" strokeLinecap="round" />
  </TabIcon>
);

/* ---------- page ---------- */

const GOOGLE: [string, string][] = [
  ["G", "#1b4282"],
  ["o", "#7c2620"],
  ["o", "#786000"],
  ["g", "#1b4282"],
  ["l", "#175226"],
  ["e", "#7c2620"],
];

export default function App() {
  return (
    <Screen>
      <GlobalStyle />
      <Header>
        <Actions>
          <IconButton type="button" aria-label="Obnovit">
            <RefreshIcon />
          </IconButton>
          <IconButton type="button" aria-label="Nastavení">
            <GearIcon />
          </IconButton>
        </Actions>
        <Title>Dopravní situace</Title>
      </Header>

      <Stage>
        <TrafficMap />
        <FilterBar>
          <Pill type="button">Filtr</Pill>
          <Pill type="button">Zobrazení Trasy</Pill>
        </FilterBar>
        <Scrim />
        <Attribution>
          {GOOGLE.map(([letter, color], i) => (
            <Letter key={i} $color={color}>
              {letter}
            </Letter>
          ))}
        </Attribution>
        <Dialog role="dialog" aria-labelledby="dialog-title">
          <DialogBar>
            <DialogTitle id="dialog-title">Informace</DialogTitle>
            <IconButton type="button" aria-label="Zavřít">
              <CloseIcon />
            </IconButton>
          </DialogBar>
          <DialogBody>
            <DialogIcon viewBox="-1 -1 122 134" aria-hidden="true">
              <Marker kind="car" />
            </DialogIcon>
            <Message>
              <MessageTitle>Porouchané vozidlo</MessageTitle>
              <MessageText>
                Od 2.12.2019 07:50 do 10:50; D1 - 199.8km na trase Říkovice - Praha; porouchané vozidlo, zdržení;
                neprůjezdná zpevněná krajnice; odstavený tahač s návěsem. SÚSD na místo k označení.
              </MessageText>
            </Message>
          </DialogBody>
        </Dialog>
      </Stage>

      <TabBar>
        <Tab href="#situace" $active aria-current="page">
          <MapTabIcon />
          Dopravní situace
        </Tab>
        <Tab href="#trasy">
          <StarTabIcon />
          Trasy zájmu
        </Tab>
        <Tab href="#dalnice">
          <CarTabIcon />
          Trasa dálnice
        </Tab>
        <Tab href="#info">
          <InfoTabIcon />
          Info
        </Tab>
      </TabBar>
    </Screen>
  );
}
